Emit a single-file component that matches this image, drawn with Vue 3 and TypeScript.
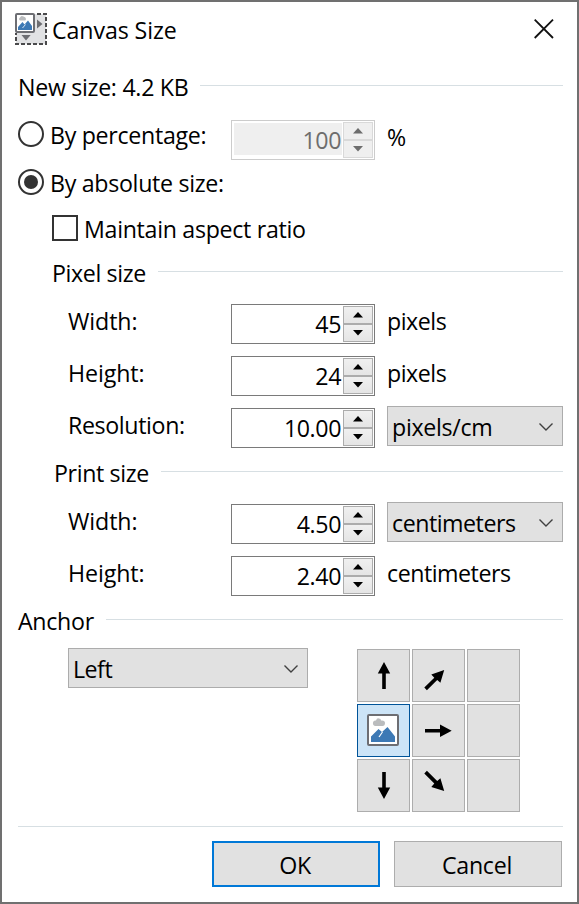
<script setup lang="ts">
import { ref } from 'vue'

interface Field {
  label: string
  value: string
  unit: string
  dropdown?: boolean
  name: string
}

const mode = ref<'percentage' | 'absolute'>('absolute')
const pixelFields: Field[] = [
  { label: 'Width:', value: '45', unit: 'pixels', name: 'width' },
  { label: 'Height:', value: '24', unit: 'pixels', name: 'height' },
  { label: 'Resolution:', value: '10.00', unit: 'pixels/cm', dropdown: true, name: 'resolution' },
]
const printFields: Field[] = [
  { label: 'Width:', value: '4.50', unit: 'centimeters', dropdown: true, name: 'width' },
  { label: 'Height:', value: '2.40', unit: 'centimeters', name: 'height' },
]
const groups = [
  { title: 'Pixel size', key: 'pixel', fields: pixelFields },
  { title: 'Print size', key: 'print', fields: printFields },
]
const anchors = ['up', 'up-right', '', 'image', 'right', '', 'down', 'down-right', '']
const arrows: Record<string, string> = {
  up: 'M25.200 40V24.500H20.800L27 13L33.200 24.500H28.800V40Z',
  'up-right': 'M12.300 38.500L22.300 28.800L19.300 25.400L32.200 21L28.400 33.700L25.200 31L14.900 41.200Z',
  right: 'M13 25.100H28V20.500L39.700 26.700L28 33V28.400H13Z',
  down: 'M25.200 13V28.500H20.800L27 40L33.200 28.500H28.800V13Z',
  'down-right': 'M14.900 11.800L25.200 22.100L28.400 19.300L32.200 32L19.300 28L22.300 24.600L12.300 14.500Z',
}
</script>

<template>
  <main class="dialog">
    <header class="titlebar">
      <svg class="app-icon" width="32" height="32" viewBox="0 0 32 32">
        <rect x="1" y="1" width="30" height="30" fill="#e1e2e4" />
        <path d="M22 1H31V31H1V20" fill="none" stroke="#4a4a4c" stroke-width="2" stroke-dasharray="4 2" />
        <rect x="1" y="1" width="18" height="18" rx="1" fill="#fff" stroke="#6d6e73" stroke-width="2" />
        <path d="M5 7.500Q3 6 5 4.500Q6 2 8.500 3.500Q11 4 11 6Q11 7.500 9.500 7.500Z" fill="#babcbe" />
        <path d="M3 17V14L7.500 9L9.500 11.500L13 7.500L17 13V17Z" fill="#3d79b5" />
        <path d="M7.500 15L10.500 11.500" stroke="#fff" stroke-width=".8" />
        <path d="M22 6.500L27.500 11L22 15.500ZM6.500 22H15.700L11 27.500Z" fill="#6d6e73" />
      </svg>
      <h1 class="text t-title">Canvas Size</h1>
      <svg class="close" width="20" height="20" viewBox="0 0 20 20"><path d="M.7 .7L19 19M19 .7L.7 19" stroke="#111" stroke-width="1.800" fill="none" /></svg>
    </header>

    <div class="section">
      <span class="text">New size: 4.2 KB</span><i class="rule"></i>
    </div>

    <div class="row percent">
      <label class="option" @click="mode = 'percentage'">
        <span class="radio" :class="{ on: mode === 'percentage' }"></span>
        <span class="text">By percentage:</span>
      </label>
      <div class="spin disabled">
        <span class="text value">100</span>
        <span class="steps"><b><svg width="10" height="6"><path d="M0 5.500L5 0L10 5.500Z" /></svg></b><b><svg width="10" height="6"><path d="M0 0H10L5 5.500Z" /></svg></b></span>
      </div>
      <span class="text sign">%</span>
    </div>
    <div class="row absolute">
      <label class="option" @click="mode = 'absolute'">
        <span class="radio" :class="{ on: mode === 'absolute' }"></span>
        <span class="text">By absolute size:</span>
      </label>
    </div>
    <label class="check"><span class="box"></span><span class="text">Maintain aspect ratio</span></label>

    <section v-for="g in groups" :key="g.key" :class="g.key">
      <div class="section inner">
        <span class="text t-group">{{ g.title }}</span><i class="rule"></i>
      </div>
      <div v-for="f in g.fields" :key="f.label" class="row field">
        <span class="text label" :class="'t-' + f.name">{{ f.label }}</span>
        <div class="spin">
          <span class="text value">{{ f.value }}</span>
          <span class="steps"><b><svg width="10" height="6"><path d="M0 5.500L5 0L10 5.500Z" /></svg></b><b><svg width="10" height="6"><path d="M0 0H10L5 5.500Z" /></svg></b></span>
        </div>
        <div v-if="f.dropdown" class="combo">
          <span class="text" :class="{ 't-cm': f.unit === 'centimeters' }">{{ f.unit }}</span>
          <svg width="14" height="8" viewBox="0 0 14 8"><path d="M.5 .5L7 7L13.500 .5" /></svg>
        </div>
        <span v-else class="text" :class="f.unit === 'centimeters' ? 't-cm' : 't-pixels'">{{ f.unit }}</span>
      </div>
    </section>

    <div class="section anchor-head">
      <span class="text">Anchor</span><i class="rule"></i>
    </div>
    <div class="anchor">
      <div class="combo wide">
        <span class="text t-left">Left</span>
        <svg width="14" height="8" viewBox="0 0 14 8"><path d="M.5 .5L7 7L13.500 .5" /></svg>
      </div>
      <div class="grid">
        <div v-for="(a, i) in anchors" :key="i" class="cell" :class="{ selected: a === 'image' }">
          <svg v-if="a === 'image'" width="53" height="53" viewBox="0 0 53 53">
            <rect x="11" y="11" width="30" height="30" rx="1" fill="#fff" stroke="#6d6e73" stroke-width="2" />
            <path d="M18 22Q15.500 21 16 18.500Q16.500 16 19 16.500Q20 13.500 22 14.500Q24 14.500 24 16.500Q28 16 28 19Q28 22 25.500 22Z" fill="#babcbe" />
            <path d="M14 38V32.500L21.500 25L25 28L30.500 23L38 32.500V38Z" fill="#3d79b5" />
            <path d="M22 33L25.500 28" stroke="#fff" stroke-width="1.200" />
          </svg>
          <svg v-else-if="a" width="53" height="53" viewBox="0 0 53 53"><path :d="arrows[a]" /></svg>
        </div>
      </div>
    </div>

    <footer class="footer">
      <button class="btn primary"><span class="text">OK</span></button>
      <button class="btn"><span class="text">Cancel</span></button>
    </footer>
  </main>
</template>

<style>
body { margin: 0; background: #fff; }
</style>

<style scoped>
* { box-sizing: border-box; }
.dialog {
  width: 579px; height: 904px; border: 2px solid #707070; background: #fff; color: #000;
  font-family: "Open Sans", "Noto Sans", sans-serif; font-size: 23.2px; overflow: hidden;
}
.text { display: block; flex: none; line-height: 32px; height: 32px; white-space: nowrap; letter-spacing: -.3px; }
.t-title { letter-spacing: -.1px; }
.t-group { letter-spacing: -.37px; }
.t-width, .t-height { letter-spacing: -.1px; }
.t-resolution { letter-spacing: -.37px; }
.t-pixels, .t-cm { letter-spacing: -.48px; }
.t-left { letter-spacing: -.5px; }
.titlebar { height: 69px; display: flex; align-items: flex-start; padding: 12px 23px 0 13px; }
.app-icon { margin-top: -1px; flex: none; }
h1 { margin: 0 auto 0 5px; font-size: inherit; font-weight: 400; }
.close { margin: 5px 0 0; }
.section { display: flex; height: 48px; padding: 0 14px 0 16px; gap: 12px; }
.rule { flex: 1; height: 1px; margin-top: 14px; background: #d7dfe3; }
.row { display: flex; align-items: flex-start; }
.percent { height: 48px; padding-left: 16px; }
.absolute { height: 46px; padding-left: 16px; }
.option { width: 213px; display: flex; gap: 6px; }
.radio { width: 26px; height: 26px; margin-top: 2px; border: 2px solid #333; border-radius: 50%; display: grid; place-items: center; }
.radio.on::after { content: ""; width: 14px; height: 14px; border-radius: 50%; background: #333; }
.sign { margin: 2px 0 0 12px; }
.check { height: 44px; display: flex; padding-left: 50px; gap: 6px; }
.box { width: 26px; height: 26px; margin-top: 2px; border: 2px solid #333; }
.inner { padding-left: 50px; }
.print .inner { padding-left: 52px; }
.field { height: 52px; padding-left: 66px; }
.pixel .field:last-child { height: 48px; }
.print .field:last-child { height: 48px; }
.label { width: 163px; }
.spin { width: 144px; height: 40px; margin: -1px 12px 0 0; border: 1px solid #7a7a7a; display: flex; justify-content: flex-end; padding: 1px; flex: none; }
.spin .value { margin: 2px 2px 0 0; letter-spacing: -.4px; }
.steps { width: 30px; height: 36px; }
.steps b { display: grid; place-items: center; height: 18px; border: 1px solid #acacac; background: linear-gradient(#f0f0f0, #e5e5e5); }
.steps svg { display: block; fill: #000; }
.disabled { border-color: #ccc; margin: 1px 0 0; color: #6d6d6d; }
.disabled .value { width: 108px; height: 32px; margin: 1px 1px 0 0; line-height: 34px; padding-right: 1px; text-align: right; background: #efefef; }
.disabled .steps b { border-color: #d9d9d9; background: #efefef; }
.disabled .steps svg { fill: #6d6d6d; }
.combo { width: 176px; height: 40px; margin-top: -3px; border: 1px solid #acacac; background: #e1e1e1; display: flex; justify-content: space-between; align-items: flex-start; padding: 4px 9px 0 4px; flex: none; }
.combo svg { margin-top: 12px; fill: none; stroke: #404040; stroke-width: 1.400; }
.anchor-head { height: 43px; }
.anchor { display: flex; height: 178px; padding-left: 66px; gap: 49px; }
.wide { width: 240px; margin: 0; }
.grid { display: grid; grid-template: repeat(3, 53px) / repeat(3, 53px); gap: 2px; margin-top: 1px; }
.cell { border: 1px solid #adadad; background: #e1e1e1; }
.cell svg { display: block; margin: -1px; }
.selected { background: #cce4f7; border-color: #005499; }
.footer { margin: 0 14px 0 16px; border-top: 1px solid #d7dfe3; padding-top: 14px; display: flex; justify-content: flex-end; gap: 14px; padding-right: 1px; }
.btn { width: 168px; height: 46px; border: 1px solid #adadad; border-radius: 0; background: #e1e1e1; color: #000; font: inherit; padding: 2px 2px 0 0; display: flex; justify-content: center; align-items: center; }
.primary { border: 2px solid #0078d7; }
</style>
